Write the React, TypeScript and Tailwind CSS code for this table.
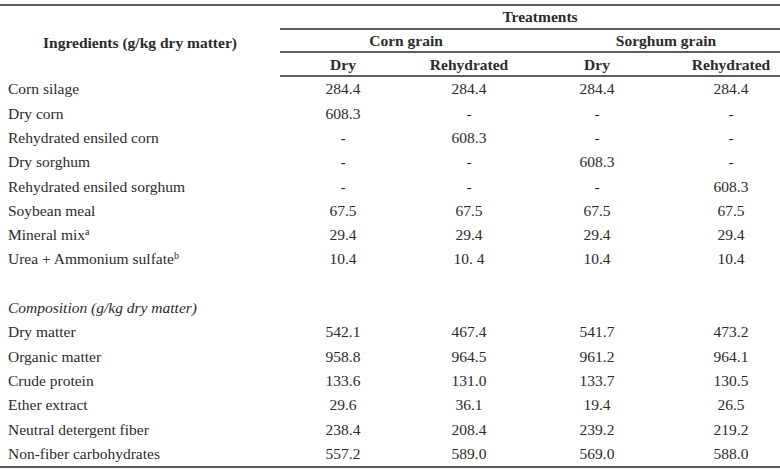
import React from "react";

type Row = { label: React.ReactNode; v: string[]; italic?: boolean; blank?: boolean };

const rows: Row[] = [
  { label: "Corn silage", v: ["284.4", "284.4", "284.4", "284.4"] },
  { label: "Dry corn", v: ["608.3", "-", "-", "-"] },
  { label: "Rehydrated ensiled corn", v: ["-", "608.3", "-", "-"] },
  { label: "Dry sorghum", v: ["-", "-", "608.3", "-"] },
  { label: "Rehydrated ensiled sorghum", v: ["-", "-", "-", "608.3"] },
  { label: "Soybean meal", v: ["67.5", "67.5", "67.5", "67.5"] },
  {
    label: (
      <>
        Mineral mix<span className="text-[10px] relative -top-[5px]">a</span>
      </>
    ),
    v: ["29.4", "29.4", "29.4", "29.4"],
  },
  {
    label: (
      <>
        Urea + Ammonium sulfate<span className="text-[10px] relative -top-[5px]">b</span>
      </>
    ),
    v: ["10.4", "10. 4", "10.4", "10.4"],
  },
  { label: "", v: ["", "", "", ""], blank: true },
  { label: "Composition (g/kg dry matter)", v: ["", "", "", ""], italic: true },
  { label: "Dry matter", v: ["542.1", "467.4", "541.7", "473.2"] },
  { label: "Organic matter", v: ["958.8", "964.5", "961.2", "964.1"] },
  { label: "Crude protein", v: ["133.6", "131.0", "133.7", "130.5"] },
  { label: "Ether extract", v: ["29.6", "36.1", "19.4", "26.5"] },
  { label: "Neutral detergent fiber", v: ["238.4", "208.4", "239.2", "219.2"] },
  { label: "Non-fiber carbohydrates", v: ["557.2", "589.0", "569.0", "588.0"] },
];

export default function App() {
  return (
    <div className="w-[780px] h-[469px] overflow-hidden bg-white text-[#2b2b2b] pt-[4px] font-['Liberation_Serif','Times_New_Roman',serif] text-[15.5px] leading-none">
      <div className="w-[800px]">
        <div className="border-t-2 border-[#5e5e5e] grid grid-cols-[280px_126px_126px_130px_138px] grid-rows-[24px_23px_24px]">
          <div className="row-span-3 flex items-center justify-center font-bold pt-[3px]">
            Ingredients (g/kg dry matter)
          </div>
          <div className="col-span-4 border-b-2 border-[#5e5e5e] flex items-center justify-center font-bold">
            Treatments
          </div>
          <div className="col-span-2 border-b-2 border-[#5e5e5e] flex items-center justify-center font-bold pt-[1px]">
            Corn grain
          </div>
          <div className="col-span-2 border-b-2 border-[#5e5e5e] flex items-center justify-center font-bold pt-[1px]">
            Sorghum grain
          </div>
          <div className="border-b-2 border-[#5e5e5e] flex items-center justify-center font-bold pt-[1px]">Dry</div>
          <div className="border-b-2 border-[#5e5e5e] flex items-center justify-center font-bold pt-[1px]">Rehydrated</div>
          <div className="border-b-2 border-[#5e5e5e] flex items-center justify-center font-bold pt-[1px]">Dry</div>
          <div className="border-b-2 border-[#5e5e5e] flex items-center justify-center font-bold pt-[1px]">Rehydrated</div>
        </div>
        <div className="border-b-2 border-[#5e5e5e]">
          {rows.map((r, i) => (
            <div key={i} className="grid grid-cols-[280px_126px_126px_130px_138px] h-[24.3px] items-center">
              <div className={`pl-[8px] whitespace-nowrap ${r.italic ? "italic" : ""}`}>{r.label}</div>
              {r.v.map((x, j) => (
                <div key={j} className="text-center">
                  {x}
                </div>
              ))}
            </div>
          ))}
        </div>
      </div>
    </div>
  );
}
